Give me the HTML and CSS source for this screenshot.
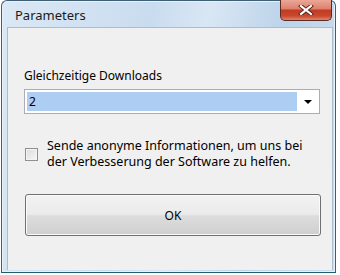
FILE: index.html
```html
<!DOCTYPE html>
<html lang="de">
<head>
<meta charset="UTF-8">
<title>Parameters</title>
<link rel="stylesheet" href="styles.css">
</head>
<body>
<div class="window">
  <div class="titlebar">
    <span class="title">Parameters</span>
    <button class="close" aria-label="Schließen">
      <svg width="16" height="10" viewBox="0 0 16 10">
        <path d="M3 1 L13 9 M13 1 L3 9" stroke="#5a1e16" stroke-width="4" stroke-linecap="square"/>
        <path d="M3 1 L13 9 M13 1 L3 9" stroke="#ffffff" stroke-width="2.2" stroke-linecap="square"/>
      </svg>
    </button>
  </div>
  <div class="client">
    <label class="label">Gleichzeitige Downloads</label>
    <div class="combo">
      <span class="combo-value">2</span>
      <span class="combo-arrow"></span>
    </div>
    <div class="check-row">
      <span class="checkbox"></span>
      <span class="check-text">Sende anonyme Informationen, um uns bei<br>der Verbesserung der Software zu helfen.</span>
    </div>
    <button class="ok">OK</button>
  </div>
</div>
</body>
</html>
```
FILE: styles.css
```css
body {
  margin: 0;
  background: #ffffff;
  font-family: "Noto Sans", "Open Sans", sans-serif;
  font-size: 12px;
  color: #000;
}

.window {
  width: 335px;
  height: 273px;
  margin: 0 0 0 1px;
  border: 1px solid #3f5f74;
  border-bottom-color: #1d5f6f;
  border-right-color: #2d6574;
  border-radius: 6px 6px 0 0;
  background: linear-gradient(100deg, #dbe8f5 0%, #c9dcef 40%, #d9e7f4 55%, #bcd3ea 75%, #cddff0 100%);
  display: flex;
  flex-direction: column;
  padding: 0 2px 2px 5px;
  box-sizing: border-box;
  box-shadow: inset 0 0 0 1px #e8f1fa;
}

.titlebar {
  height: 26px;
  display: flex;
  align-items: flex-start;
  justify-content: space-between;
}

.title {
  margin: 5px 0 0 8px;
  font-size: 13px;
  color: #1a1a1a;
}

.close {
  width: 52px;
  height: 21px;
  margin: -1px 1px 0 0;
  border: 1px solid #5b2a24;
  border-top: none;
  border-radius: 0 0 5px 5px;
  background: linear-gradient(#eba797 0%, #dc7f6b 45%, #c13a22 50%, #c9492f 80%, #e0866a 100%);
  display: flex;
  justify-content: center;
  align-items: center;
  padding: 0;
}

.client {
  flex: 1;
  background: #f0f0f0;
  border: 1px solid #a9bdd0;
  border-bottom: none;
  padding: 0 15px 0 16px;
  display: flex;
  flex-direction: column;
}

.label {
  margin-top: 40px;
  display: block;
  font-size: 12px;
  line-height: 16px;
}

.combo {
  margin-top: 5px;
  width: 296px;
  height: 25px;
  box-sizing: border-box;
  border: 1px solid #abadb3;
  background: #ffffff;
  display: flex;
  align-items: stretch;
  padding: 2px;
}

.combo-value {
  flex: 1;
  background: #aecdf3;
  line-height: 19px;
  padding-left: 2px;
}

.combo-arrow {
  width: 20px;
  position: relative;
}

.combo-arrow::after {
  content: "";
  position: absolute;
  left: 7px;
  top: 8px;
  border-left: 4px solid transparent;
  border-right: 4px solid transparent;
  border-top: 4px solid #000;
}

.check-row {
  margin-top: 24px;
  display: flex;
  align-items: flex-start;
  gap: 9px;
}

.checkbox {
  flex: none;
  width: 13px;
  height: 13px;
  margin-top: 10px;
  margin-left: 1px;
  box-sizing: border-box;
  border: 1px solid #8e8f8f;
  background: linear-gradient(135deg, #dcdcdc, #f6f6f6);
  box-shadow: inset 0 0 0 1px #f4f4f4;
}

.check-text {
  font-size: 12.5px;
  line-height: 16px;
  white-space: nowrap;
}

.ok {
  margin-top: 24px;
  margin-left: 1px;
  width: 296px;
  height: 42px;
  border: 1px solid #707070;
  border-radius: 3px;
  background: linear-gradient(#f2f2f2 0%, #ebebeb 48%, #dddddd 52%, #cfcfcf 100%);
  box-shadow: inset 0 0 0 1px #fbfbfb;
  font-family: inherit;
  font-size: 12px;
  color: #000;
}
```
